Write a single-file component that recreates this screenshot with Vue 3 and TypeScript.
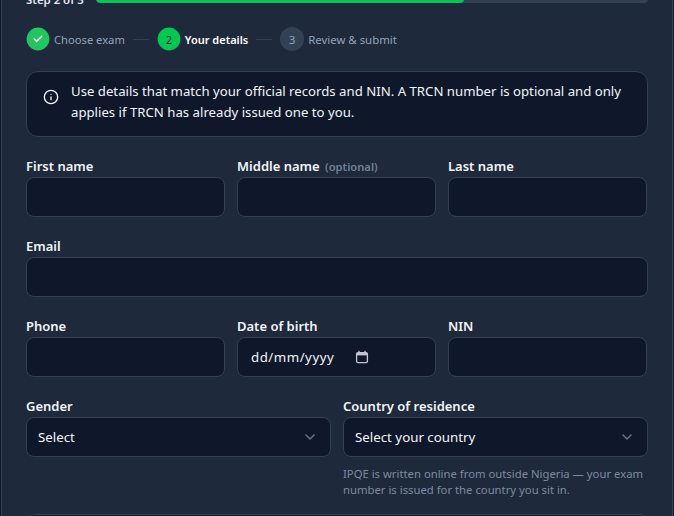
<script setup lang="ts">
interface Step { n: number; label: string; state: 'done' | 'active' | 'todo' }
const steps: Step[] = [
  { n: 1, label: 'Choose exam', state: 'done' },
  { n: 2, label: 'Your details', state: 'active' },
  { n: 3, label: 'Review & submit', state: 'todo' },
]
</script>

<template>
  <div class="viewport">
    <main class="card">
      <div class="progress">
        <span class="progress-label">Step 2 of 3</span>
        <div class="track"><div class="fill" style="width: 66.67%"></div></div>
      </div>

      <ol class="stepper">
        <template v-for="(s, i) in steps" :key="s.n">
          <li v-if="i > 0" class="line" aria-hidden="true"></li>
          <li class="step" :class="s.state">
            <span class="dot">
              <svg v-if="s.state === 'done'" width="12" height="12" viewBox="0 0 24 24" fill="none" stroke="currentColor" stroke-width="3" stroke-linecap="round" stroke-linejoin="round"><path d="M20 6 9 17l-5-5" /></svg>
              <template v-else>{{ s.n }}</template>
            </span>
            <span class="step-label">{{ s.label }}</span>
          </li>
        </template>
      </ol>

      <div class="notice">
        <svg class="notice-icon" width="16" height="16" viewBox="0 0 24 24" fill="none" stroke="currentColor" stroke-width="2" stroke-linecap="round" stroke-linejoin="round"><circle cx="12" cy="12" r="10" /><path d="M12 16v-4" /><path d="M12 8h.01" /></svg>
        <p>Use details that match your official records and NIN. A TRCN number is optional and only applies if TRCN has already issued one to you.</p>
      </div>

      <div class="grid three">
        <label class="field"><span class="lbl">First name</span><input class="control" type="text" /></label>
        <label class="field"><span class="lbl">Middle name <em>(optional)</em></span><input class="control" type="text" /></label>
        <label class="field"><span class="lbl">Last name</span><input class="control" type="text" /></label>
      </div>

      <label class="field"><span class="lbl">Email</span><input class="control" type="email" /></label>

      <div class="grid three">
        <label class="field"><span class="lbl">Phone</span><input class="control" type="tel" /></label>
        <div class="field">
          <span class="lbl">Date of birth</span>
          <div class="control date">
            <span>dd/mm/yyyy</span>
            <svg width="14" height="14" viewBox="0 0 14 14" fill="none"><rect x="1.6" y="2.6" width="10.8" height="10" rx="1.4" stroke="#c2c6cc" stroke-width="1.3" /><path d="M1.6 3h10.8v2.4H1.6z" fill="#c2c6cc" /><path d="M4 .8v2M10 .8v2" stroke="#c2c6cc" stroke-width="1.3" /></svg>
          </div>
        </div>
        <label class="field"><span class="lbl">NIN</span><input class="control" type="text" /></label>
      </div>

      <div class="grid two">
        <div class="field">
          <span class="lbl">Gender</span>
          <div class="control select">
            <span>Select</span>
            <svg width="20" height="20" viewBox="0 0 20 20" fill="none" stroke="#6b7280" stroke-width="1.5" stroke-linecap="round" stroke-linejoin="round"><path d="m6 8 4 4 4-4" /></svg>
          </div>
        </div>
        <div class="field">
          <span class="lbl">Country of residence</span>
          <div class="control select">
            <span>Select your country</span>
            <svg width="20" height="20" viewBox="0 0 20 20" fill="none" stroke="#6b7280" stroke-width="1.5" stroke-linecap="round" stroke-linejoin="round"><path d="m6 8 4 4 4-4" /></svg>
          </div>
          <p class="hint">IPQE is written online from outside Nigeria — your exam number is issued for the country you sit in.</p>
        </div>
      </div>

      <input class="control last" type="text" />
    </main>
  </div>
</template>

<style>
html, body { margin: 0; background: #0f172a; }
</style>

<style scoped>
.viewport {
  height: 516px;
  overflow: hidden;
  font-family: "Noto Sans", "Open Sans", sans-serif;
  color: #fff;
}
.card {
  box-sizing: border-box;
  width: 672px;
  margin: -15px 0 0 1px;
  padding: 8px 24px 24px;
  background: #1e293b;
  border: 1px solid #334155;
  display: flex;
  flex-direction: column;
  gap: 20px;
}
.progress { display: flex; align-items: center; gap: 12px; height: 16px; }
.progress-label { font-size: 11.4px; font-weight: 600; color: #e2e8f0; white-space: nowrap; margin-bottom: 6px; }
.track { flex: 1; height: 8px; margin-top: -6px; border-radius: 4px; background: #334155; overflow: hidden; }
.fill { height: 100%; background: #00c853; border-radius: 4px; }
.stepper { list-style: none; margin: -3px 0 0; padding: 0; display: flex; align-items: center; gap: 8px; height: 24px; }
.step { display: flex; align-items: center; gap: 4px; font-size: 11.2px; color: #94a3b8; white-space: nowrap; }
.todo .step-label { font-size: 11.4px; }
.dot { box-sizing: border-box; width: 24px; height: 24px; border-radius: 50%; display: flex; align-items: center; justify-content: center; font-size: 11px; background: #334155; }
.done .dot { background: #22c55e; color: #fff; transform: scale(.95); }
.active .dot { background: #00c853; color: #0f172a; transform: scale(.95); }
.active .step-label { color: #fff; font-weight: 600; font-size: 11px; }
.line { width: 16px; height: 1px; background: #334155; }
.notice {
  display: flex; align-items: flex-start; gap: 12px;
  padding: 9px 16px;
  background: #0f172a;
  border: 1px solid #334155;
  border-radius: 12px;
  height: 66px;
  box-sizing: border-box;
  color: #f1f5f9;
}
.notice p { margin: 0; font-size: 13.2px; line-height: 20.5px; }
.notice-icon { flex: none; margin-top: 8px; }
.grid { display: grid; gap: 12px; align-items: start; }
.three { grid-template-columns: repeat(3, 199px); }
.two { grid-template-columns: repeat(2, 1fr); margin-bottom: -4px; }
.field { display: flex; flex-direction: column; gap: 1px; min-width: 0; }
.lbl { font-size: 13px; font-weight: 600; line-height: 19px; color: #f1f5f9; }
.lbl em { font-style: normal; font-weight: 600; font-size: 11.2px; color: #718096; margin-left: 2px; }
.control {
  box-sizing: border-box;
  width: 100%;
  height: 40px;
  padding: 0 12px;
  background: #0f172a;
  border: 1px solid #334155;
  border-radius: 8px;
  color: #f1f5f9;
  font: 13.3px "Noto Sans", sans-serif;
  outline: none;
}
.last { flex: none; }
.date { display: flex; align-items: center; gap: 21px; letter-spacing: .5px; padding-left: 13px; }
.select { display: flex; align-items: center; justify-content: space-between; padding: 0 10px 0 11px; }
.hint { margin: 8px 0 0; font-size: 11.3px; line-height: 16px; color: #7c8ba1; }
</style>
